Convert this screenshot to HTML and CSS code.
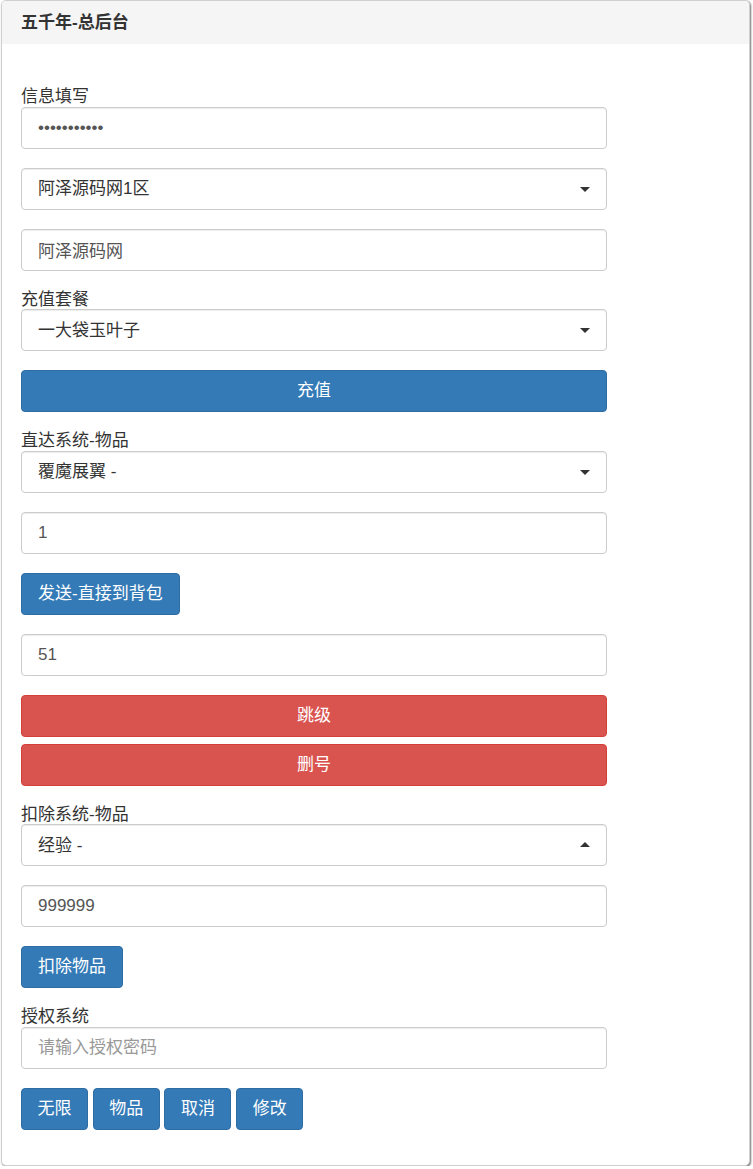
FILE: index.html
```html
<!DOCTYPE html>
<html lang="zh-CN">
<head>
<meta charset="utf-8">
<title>五千年-总后台</title>
<link rel="stylesheet" href="styles.css">
</head>
<body>
<div class="panel">
  <div class="panel-heading">五千年-总后台</div>
  <div class="panel-body">
    <form class="form">
      <div class="group">
        <label class="label">信息填写</label>
        <input class="control" type="password" value="12345678901">
      </div>
      <div class="group">
        <div class="select-wrap">
          <select class="control select"><option>阿泽源码网1区</option></select>
        </div>
      </div>
      <div class="group">
        <input class="control" type="text" value="阿泽源码网">
      </div>
      <div class="group">
        <label class="label">充值套餐</label>
        <div class="select-wrap">
          <select class="control select"><option>一大袋玉叶子</option></select>
        </div>
      </div>
      <div class="group">
        <button type="button" class="btn btn-primary btn-block">充值</button>
      </div>
      <div class="group">
        <label class="label">直达系统-物品</label>
        <div class="select-wrap">
          <select class="control select"><option>覆魔展翼 -</option></select>
        </div>
      </div>
      <div class="group">
        <input class="control" type="text" value="1">
      </div>
      <div class="group">
        <button type="button" class="btn btn-primary">发送-直接到背包</button>
      </div>
      <div class="group">
        <input class="control" type="text" value="51">
      </div>
      <div class="group">
        <button type="button" class="btn btn-danger btn-block">跳级</button>
        <button type="button" class="btn btn-danger btn-block btn-next">删号</button>
      </div>
      <div class="group">
        <label class="label">扣除系统-物品</label>
        <div class="select-wrap up">
          <select class="control select"><option>经验 -</option></select>
        </div>
      </div>
      <div class="group">
        <input class="control" type="text" value="999999">
      </div>
      <div class="group">
        <button type="button" class="btn btn-primary">扣除物品</button>
      </div>
      <div class="group">
        <label class="label">授权系统</label>
        <input class="control" type="text" placeholder="请输入授权密码">
      </div>
      <div class="group last">
        <button type="button" class="btn btn-primary btn-sm">无限</button>
        <button type="button" class="btn btn-primary btn-sm">物品</button>
        <button type="button" class="btn btn-primary btn-sm">取消</button>
        <button type="button" class="btn btn-primary btn-sm">修改</button>
      </div>
    </form>
  </div>
</div>
</body>
</html>
```

FILE: styles.css
```css
html, body {
  margin: 0;
  padding: 0;
  background: #fff;
}

body {
  font-family: "Liberation Sans", "Noto Sans CJK SC", sans-serif;
  font-size: 17px;
  color: #333;
}

.panel {
  box-sizing: border-box;
  margin-left: 1px;
  width: 749px;
  height: 1166px;
  border: 1px solid #cfcfcf;
  border-radius: 5px;
  box-shadow: 1px 1px 2px rgba(0, 0, 0, 0.55);
  overflow: hidden;
  background: #fff;
}

.panel-heading {
  background: #f5f5f5;
  height: 43px;
  line-height: 44px;
  padding: 0 19px;
  font-size: 17px;
  font-weight: bold;
  color: #333;
}

.panel-body {
  padding: 43px 19px 0 19px;
}

.form {
  width: 586px;
  margin: 0;
}

.group {
  margin-bottom: 19px;
}

.label {
  display: block;
  height: 19.5px;
  line-height: 20px;
  font-weight: normal;
  color: #333;
}

.control {
  display: block;
  box-sizing: border-box;
  width: 100%;
  height: 42px;
  margin: 0;
  padding: 0 16px;
  border: 1px solid #ccc;
  border-radius: 4px;
  background: #fff;
  font-family: "Liberation Sans", "Noto Sans CJK SC", sans-serif;
  font-size: 17px;
  color: #555;
  box-shadow: inset 0 1px 1px rgba(0, 0, 0, 0.075);
  outline: none;
}

.control::placeholder {
  color: #999;
}

.select {
  -webkit-appearance: none;
  appearance: none;
  color: #333;
  padding-right: 40px;
}

.select-wrap {
  position: relative;
}

.select-wrap::after {
  content: "";
  position: absolute;
  right: 17px;
  top: 19px;
  width: 0;
  height: 0;
  border-left: 5px solid transparent;
  border-right: 5px solid transparent;
  border-top: 5px solid #333;
  pointer-events: none;
}

.select-wrap.up::after {
  border-top: 0;
  border-bottom: 5px solid #333;
  top: 18px;
}

.btn {
  display: inline-block;
  box-sizing: border-box;
  height: 42px;
  margin: 0;
  padding: 0 16px;
  border: 1px solid transparent;
  border-radius: 4px;
  font-family: "Liberation Sans", "Noto Sans CJK SC", sans-serif;
  font-size: 17px;
  line-height: 40px;
  color: #fff;
  cursor: pointer;
  vertical-align: middle;
}

.btn-sm {
  width: 67px;
  padding: 0;
  text-align: center;
}

.btn-primary {
  background: #337ab7;
  border-color: #2e6da4;
}

.btn-danger {
  background: #d9534f;
  border-color: #d43f3a;
}

.btn-block {
  display: block;
  width: 100%;
}

.btn-next {
  margin-top: 7px;
}
```
